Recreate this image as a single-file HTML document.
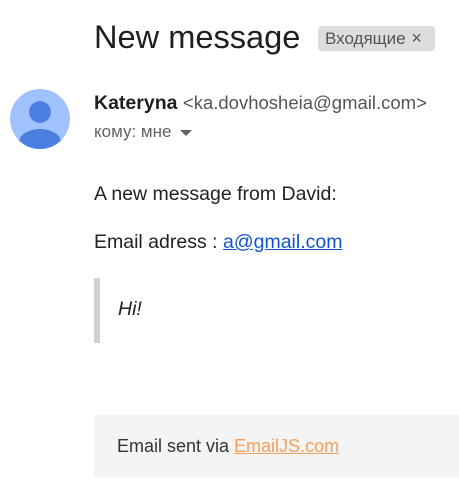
<!DOCTYPE html>
<html><head><meta charset="utf-8"><style>
body{margin:0;width:459px;height:489px;background:#fff;position:relative;overflow:hidden;font-family:"Liberation Sans",Arial,sans-serif;}
.a{position:absolute;white-space:nowrap;}
</style></head><body>
<div class="a" style="left:94px;top:17px;font-size:32.6px;color:#1f1f1f;line-height:40px;">New message</div>
<div class="a" style="left:318px;top:26px;width:117px;height:25px;background:#dddddd;border-radius:4px;font-size:17px;color:#555;line-height:25px;padding-left:7px;box-sizing:border-box;">Входящие <span style="font-size:18px;margin-left:1px">×</span></div>
<svg class="a" style="left:10px;top:89px" width="60" height="60" viewBox="0 0 60 60">
<defs><clipPath id="c"><circle cx="30" cy="30" r="30"/></clipPath></defs>
<circle cx="30" cy="30" r="30" fill="#a0c3ff"/>
<g clip-path="url(#c)" fill="#4a7fe0"><circle cx="30" cy="23" r="11"/><ellipse cx="30" cy="53" rx="21" ry="13"/></g>
</svg>
<div class="a" style="left:94px;top:92px;font-size:19.5px;color:#1f1f1f;line-height:22px;"><b>Kateryna</b> <span style="font-size:18.5px;color:#555;">&lt;ka.dovhosheia@gmail.com&gt;</span></div>
<div class="a" style="left:94px;top:122px;font-size:17px;color:#5f6368;line-height:20px;">кому: мне <span style="display:inline-block;width:0;height:0;border-left:6px solid transparent;border-right:6px solid transparent;border-top:6px solid #5f6368;vertical-align:middle;margin-left:4px"></span></div>
<div class="a" style="left:94px;top:182px;font-size:19.5px;color:#222;line-height:24px;">A new message from David:</div>
<div class="a" style="left:94px;top:230px;font-size:19.5px;color:#222;line-height:24px;">Email adress : <span style="color:#1155cc;text-decoration:underline;">a@gmail.com</span></div>
<div class="a" style="left:94px;top:278px;width:6px;height:65px;background:#d0d0d0;"></div>
<div class="a" style="left:118px;top:297px;font-size:19.5px;font-style:italic;color:#222;line-height:24px;">Hi!</div>
<div class="a" style="left:94px;top:415px;width:365px;height:62px;background:#f4f4f4;"></div>
<div class="a" style="left:117px;top:435px;font-size:18px;color:#333;line-height:22px;">Email sent via <span style="color:#f5a05a;text-decoration:underline;">EmailJS.com</span></div>
</body></html>
